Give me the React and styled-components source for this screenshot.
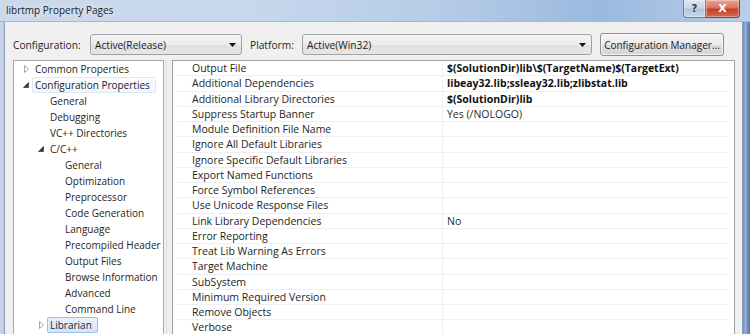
import React from 'react';
import styled, { createGlobalStyle } from 'styled-components';

const GlobalStyle = createGlobalStyle`
  html, body {
    margin: 0;
    padding: 0;
    background: #f0f0f0;
    overflow: hidden;
  }
  body {
    font-family: 'Open Sans', 'Noto Sans', 'DejaVu Sans', sans-serif;
    font-size: 10px;
    color: #1e1e1e;
  }
`;

const Window = styled.div`
  width: 750px;
  height: 334px;
  display: flex;
  flex-direction: column;
  overflow: hidden;
`;

const TitleBar = styled.div`
  height: 22px;
  flex: none;
  display: flex;
  align-items: flex-start;
  background: linear-gradient(to right, #cbd9ea 0%, #c6d7ec 35%, #b4cbe7 60%, #9ab9df 80%, #b8cde8 100%);
  border-bottom: 1px solid #a7b8cd;
  box-sizing: border-box;
`;

const TitleText = styled.div`
  padding-left: 6px;
  line-height: 21px;
  font-size: 10px;
  color: #1a1a1a;
  text-shadow: 0 0 6px rgba(255, 255, 255, 0.9);
`;

const CaptionButtons = styled.div`
  margin-left: auto;
  margin-right: 10px;
  display: flex;
`;

const CaptionButton = styled.div`
  width: ${p => (p.$close ? '34px' : '23px')};
  height: 18px;
  box-sizing: border-box;
  display: flex;
  align-items: center;
  justify-content: center;
  border: 1px solid ${p => (p.$close ? '#8d3a2c' : '#6c7d94')};
  border-top: none;
  border-left: ${p => (p.$close ? 'none' : '1px solid #6c7d94')};
  border-radius: ${p => (p.$close ? '0 0 4px 0' : '0 0 0 4px')};
  background: ${p =>
    p.$close
      ? 'linear-gradient(#e8a493 0%, #d9755f 45%, #c2412a 55%, #d46a4f 100%)'
      : 'linear-gradient(#dde6f1 0%, #c9d7e8 45%, #b2c5de 55%, #c6d6ea 100%)'};
  color: ${p => (p.$close ? '#fff' : '#2b3a4f')};
  font-family: 'DejaVu Sans', sans-serif;
  font-weight: bold;
  font-size: ${p => (p.$close ? '11px' : '10px')};
  box-shadow: inset 0 0 0 1px rgba(255, 255, 255, 0.35);
`;

const Body = styled.div`
  flex: 1;
  min-height: 0;
  display: flex;
`;

const LeftEdge = styled.div`
  width: 5px;
  flex: none;
  box-sizing: border-box;
  background: linear-gradient(to right, #c9d8ea, #bccde3);
  border-right: 1px solid #8e9fb6;
`;

const RightEdge = styled.div`
  width: 8px;
  flex: none;
  background: linear-gradient(to right, #8ea6c6 0px, #6f8fb9 2px, #a4b9d6 3px, #7898c2 5px, #5676a3 8px);
`;

const Client = styled.div`
  flex: 1;
  min-width: 0;
  display: flex;
  flex-direction: column;
  padding: 11px 7px 0 8px;
  background: #f0f0f0;
`;

const ConfigRow = styled.div`
  height: 23px;
  flex: none;
  display: flex;
  align-items: center;
`;

const FieldLabel = styled.span`
  width: ${p => p.$width}px;
  padding-left: ${p => p.$indent || 0}px;
  box-sizing: border-box;
  flex: none;
  font-size: 10.2px;
`;

const Combo = styled.div`
  width: ${p => p.$width}px;
  height: 21px;
  flex: none;
  box-sizing: border-box;
  display: flex;
  align-items: center;
  padding: 0 5px 0 4px;
  border: 1px solid #a2a2a2;
  border-radius: 3px;
  background: linear-gradient(#f4f4f4 0%, #ececec 50%, #e0e0e0 51%, #e6e6e6 100%);
  font-size: 10.2px;
`;

const ComboText = styled.span`
  flex: 1;
`;

const PushButton = styled.div`
  width: 124px;
  height: 23px;
  flex: none;
  margin-left: 8px;
  box-sizing: border-box;
  display: flex;
  align-items: center;
  justify-content: center;
  border: 1px solid #8f8f8f;
  border-radius: 3px;
  background: linear-gradient(#f4f4f4 0%, #ebebeb 50%, #dddddd 51%, #d6d6d6 100%);
  box-shadow: inset 0 0 0 1px rgba(255, 255, 255, 0.7);
  font-size: 10px;
`;

const MainArea = styled.div`
  flex: 1;
  min-height: 0;
  display: flex;
  margin-top: 4px;
`;

const TreePanel = styled.div`
  width: 151px;
  flex: none;
  box-sizing: border-box;
  border: 1px solid #a8a8a8;
  border-bottom: none;
  background: #fff;
  padding-left: 7px;
  overflow: hidden;
`;

const TreeRow = styled.div`
  height: 16px;
  display: flex;
  align-items: center;
  padding-left: ${p => p.$level * 15}px;
  white-space: nowrap;
`;

const Expander = styled.span`
  width: 10px;
  height: 10px;
  flex: none;
  margin-right: 1px;
  display: flex;
`;

const TreeLabel = styled.span`
  height: 16px;
  box-sizing: border-box;
  display: flex;
  align-items: center;
  padding: 0 5px 0 2px;
  border: 1px solid transparent;
  border-radius: 2px;
  font-size: 10px;
  ${p =>
    p.$state === 'hover' &&
    `
    border-color: #dde8f5;
    background: linear-gradient(#fbfdff, #f1f6fd);
  `}
  ${p =>
    p.$state === 'selected' &&
    `
    border-color: #9cc0ea;
    background: linear-gradient(#e7f1fd, #d2e5fc);
  `}
`;

const Splitter = styled.div`
  width: 8px;
  flex: none;
  background: linear-gradient(to right, transparent 2px, #dcdcdc 2px, #dcdcdc 3px, transparent 3px);
`;

const GridPanel = styled.div`
  flex: 1;
  min-width: 0;
  box-sizing: border-box;
  border: 1px solid #a0a0a0;
  border-bottom: none;
  background: #fff;
  padding: 0 6px 0 4px;
  overflow: hidden;
`;

const GridRow = styled.div`
  height: 15.25px;
  box-sizing: border-box;
  display: grid;
  grid-template-columns: 266px 1fr;
  border-bottom: 1px solid #efefef;
  white-space: nowrap;
`;

const NameCell = styled.div`
  display: flex;
  align-items: center;
  padding-left: 15px;
  border-right: 1px solid #efefef;
  font-size: 10.5px;
`;

const ValueCell = styled.div`
  display: flex;
  align-items: center;
  padding-left: 4px;
  font-size: 10.5px;
  font-weight: ${p => (p.$bold ? 700 : 400)};
  color: ${p => (p.$bold ? '#111' : '#2a2a2a')};
`;

const DropArrow = () => (
  <svg width="7" height="4" viewBox="0 0 7 4">
    <path d="M0 0 L7 0 L3.5 4 Z" fill="#111" />
  </svg>
);

const ExpanderIcon = ({ type }) => {
  if (type === 'collapsed') {
    return (
      <svg width="10" height="10" viewBox="0 0 10 10">
        <path d="M3.5 1.5 L7.5 5 L3.5 8.5 Z" fill="#fff" stroke="#a6a6a6" strokeWidth="1" />
      </svg>
    );
  }
  if (type === 'expanded') {
    return (
      <svg width="10" height="10" viewBox="0 0 10 10">
        <path d="M7.5 2.5 L7.5 7.5 L2.5 7.5 Z" fill="#3f3f3f" stroke="#3f3f3f" strokeWidth="0.8" />
      </svg>
    );
  }
  return null;
};

const treeItems = [
  { label: 'Common Properties', level: 0, expander: 'collapsed' },
  { label: 'Configuration Properties', level: 0, expander: 'expanded', state: 'hover' },
  { label: 'General', level: 1 },
  { label: 'Debugging', level: 1 },
  { label: 'VC++ Directories', level: 1 },
  { label: 'C/C++', level: 1, expander: 'expanded' },
  { label: 'General', level: 2 },
  { label: 'Optimization', level: 2 },
  { label: 'Preprocessor', level: 2 },
  { label: 'Code Generation', level: 2 },
  { label: 'Language', level: 2 },
  { label: 'Precompiled Header', level: 2 },
  { label: 'Output Files', level: 2 },
  { label: 'Browse Information', level: 2 },
  { label: 'Advanced', level: 2 },
  { label: 'Command Line', level: 2 },
  { label: 'Librarian', level: 1, expander: 'collapsed', state: 'selected' },
];

const properties = [
  { name: 'Output File', value: '$(SolutionDir)lib\\$(TargetName)$(TargetExt)', bold: true },
  { name: 'Additional Dependencies', value: 'libeay32.lib;ssleay32.lib;zlibstat.lib', bold: true },
  { name: 'Additional Library Directories', value: '$(SolutionDir)lib', bold: true },
  { name: 'Suppress Startup Banner', value: 'Yes (/NOLOGO)' },
  { name: 'Module Definition File Name' },
  { name: 'Ignore All Default Libraries' },
  { name: 'Ignore Specific Default Libraries' },
  { name: 'Export Named Functions' },
  { name: 'Force Symbol References' },
  { name: 'Use Unicode Response Files' },
  { name: 'Link Library Dependencies', value: 'No' },
  { name: 'Error Reporting' },
  { name: 'Treat Lib Warning As Errors' },
  { name: 'Target Machine' },
  { name: 'SubSystem' },
  { name: 'Minimum Required Version' },
  { name: 'Remove Objects' },
  { name: 'Verbose' },
];

export default function App() {
  return (
    <>
      <GlobalStyle />
      <Window>
        <TitleBar>
          <TitleText>librtmp Property Pages</TitleText>
          <CaptionButtons>
            <CaptionButton>?</CaptionButton>
            <CaptionButton $close>X</CaptionButton>
          </CaptionButtons>
        </TitleBar>
        <Body>
          <LeftEdge />
          <Client>
            <ConfigRow>
              <FieldLabel $width={77}>Configuration:</FieldLabel>
              <Combo $width={152}>
                <ComboText>Active(Release)</ComboText>
                <DropArrow />
              </Combo>
              <FieldLabel $width={60} $indent={8}>Platform:</FieldLabel>
              <Combo $width={290}>
                <ComboText>Active(Win32)</ComboText>
                <DropArrow />
              </Combo>
              <PushButton>Configuration Manager...</PushButton>
            </ConfigRow>
            <MainArea>
              <TreePanel>
                {treeItems.map((item, i) => (
                  <TreeRow key={i} $level={item.level}>
                    <Expander>
                      <ExpanderIcon type={item.expander} />
                    </Expander>
                    <TreeLabel $state={item.state}>{item.label}</TreeLabel>
                  </TreeRow>
                ))}
              </TreePanel>
              <Splitter />
              <GridPanel>
                {properties.map(p => (
                  <GridRow key={p.name}>
                    <NameCell>{p.name}</NameCell>
                    <ValueCell $bold={p.bold}>{p.value}</ValueCell>
                  </GridRow>
                ))}
              </GridPanel>
            </MainArea>
          </Client>
          <RightEdge />
        </Body>
      </Window>
    </>
  );
}
